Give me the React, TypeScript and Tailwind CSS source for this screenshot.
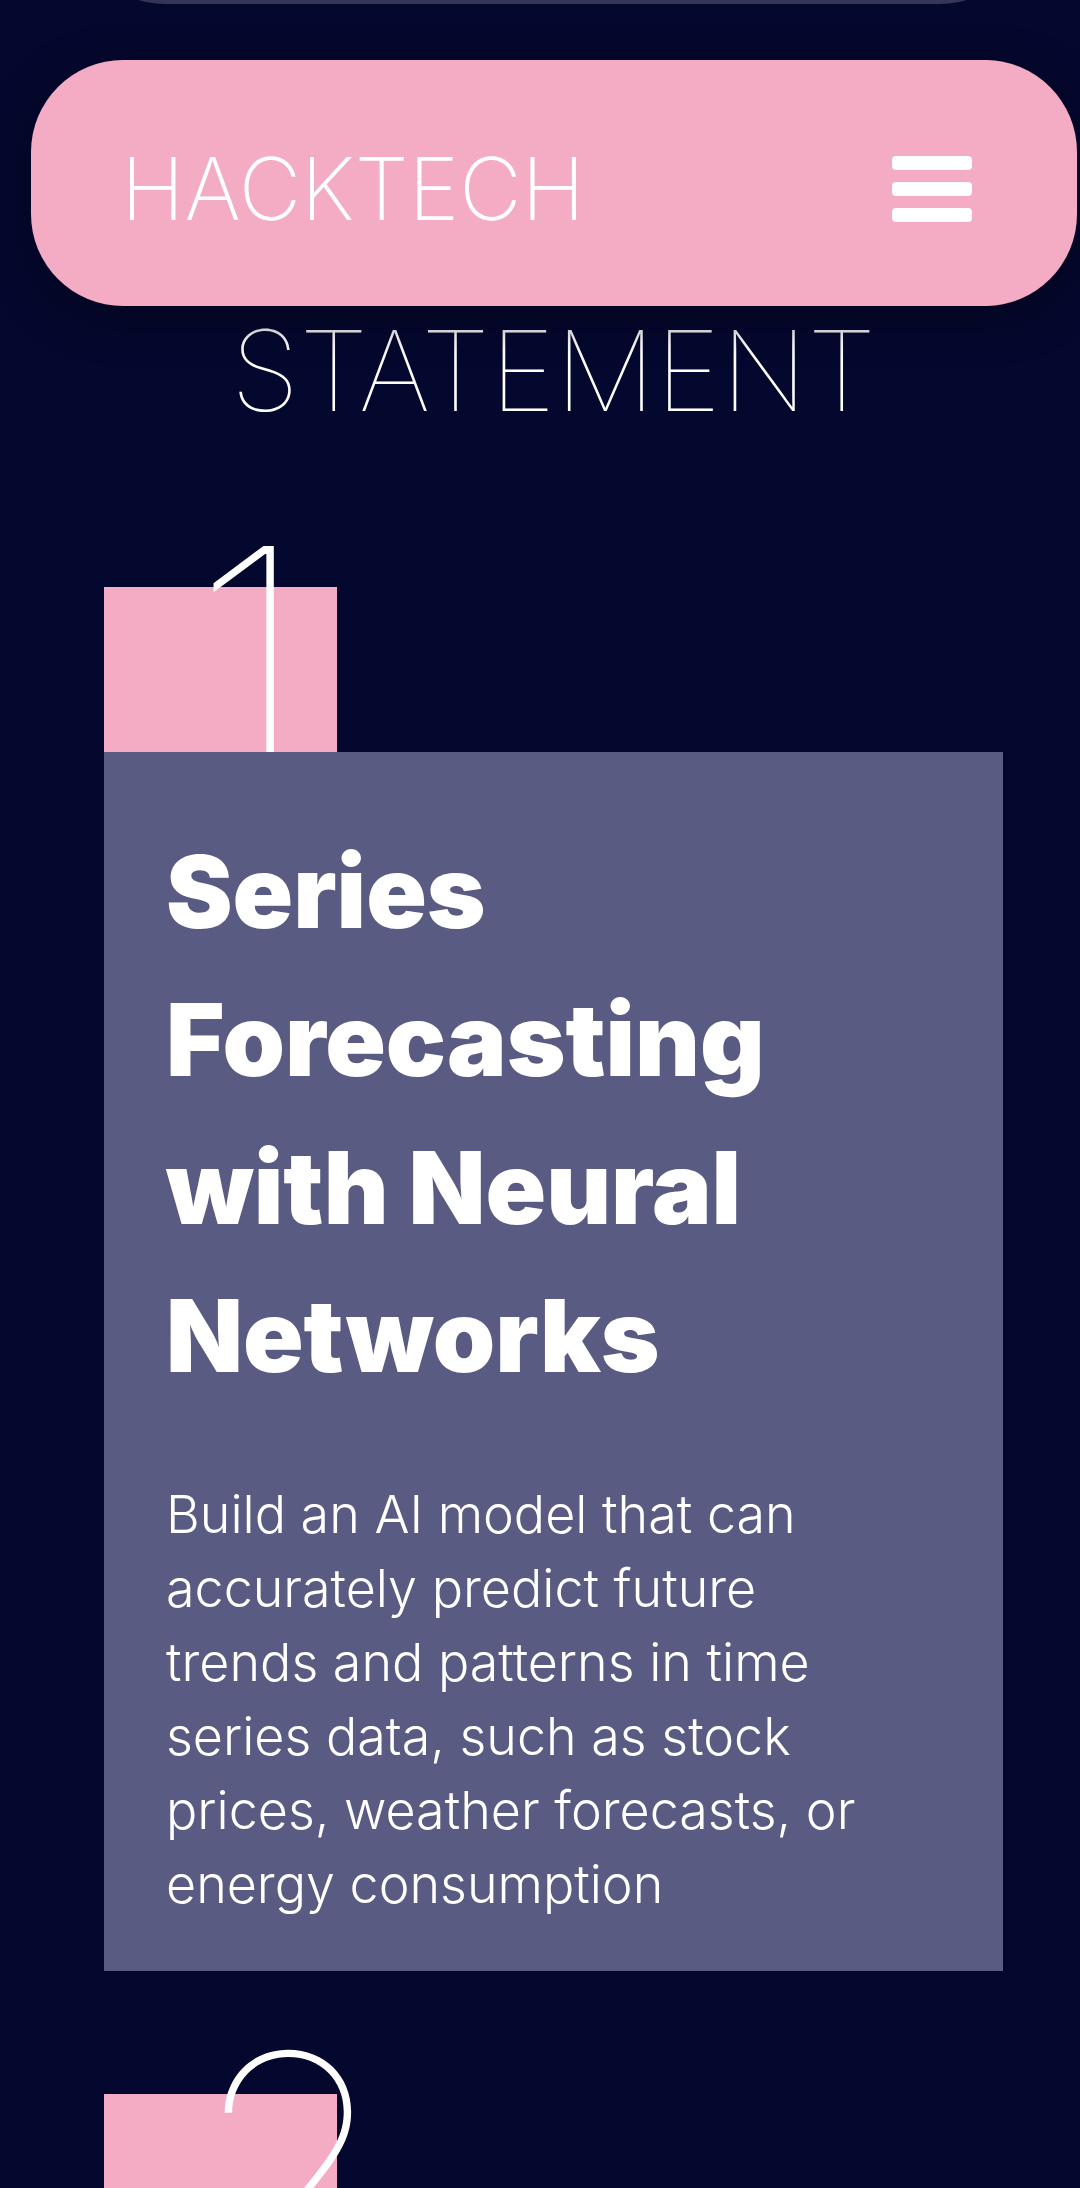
import React from 'react';

type Problem = { number: string; title?: string; text?: string };

const problems: Problem[] = [
  {
    number: '1',
    title: 'Series Forecasting with Neural Networks',
    text: 'Build an AI model that can accurately predict future trends and patterns in time series data, such as stock prices, weather forecasts, or energy consumption',
  },
  { number: '2' },
];

function Header() {
  return (
    <header className="fixed top-[60px] right-[3px] left-[31px] z-10 flex items-center justify-between rounded-[92px] bg-[#f4acc4] pt-[62px] pr-[105px] pb-[50px] pl-[90px] shadow-[0_12px_36px_6px_rgba(4,4,24,0.5)]">
      <a href="#home" className="text-[86px] leading-[134px] font-extralight text-white">
        HACKTECH
      </a>
      <button type="button" aria-label="Open menu" className="flex w-20 flex-col gap-3">
        <span className="h-[14px] rounded-[4px] bg-white" />
        <span className="h-[14px] rounded-[4px] bg-white" />
        <span className="h-[14px] rounded-[4px] bg-white" />
      </button>
    </header>
  );
}

function ProblemCard({ number, title, text }: Problem) {
  return (
    <article>
      <div className="relative h-[165px] w-[233px] bg-[#f4acc4]">
        <span className="absolute -top-[121px] left-[86px] text-[330px] leading-[400px] font-thin text-white">
          {number}
        </span>
      </div>
      <div className="relative bg-[#5a5b82] pt-[66px] pr-[110px] pb-[49px] pl-[62px] text-white">
        {title && <h2 className="text-[100px] leading-[148px] font-black">{title}</h2>}
        {text && <p className="mt-[68px] text-[52px] leading-[74px] font-light">{text}</p>}
      </div>
    </article>
  );
}

export default function App() {
  return (
    <div className="h-screen overflow-hidden bg-[#05082e] font-['Inter',sans-serif]">
      <Header />
      <div className="mr-[50px] ml-[75px] h-1 overflow-hidden">
        <div className="-mt-[196px] h-[200px] rounded-[90px] bg-[#363557]" />
      </div>
      <main className="mr-[77px] ml-[104px]">
        <h1 className="pt-[292px] text-center text-[112px] leading-[148px] font-thin text-white">STATEMENT</h1>
        <div className="flex flex-col gap-[123px] pt-[143px]">
          {problems.map((p) => (
            <ProblemCard key={p.number} {...p} />
          ))}
        </div>
      </main>
    </div>
  );
}
